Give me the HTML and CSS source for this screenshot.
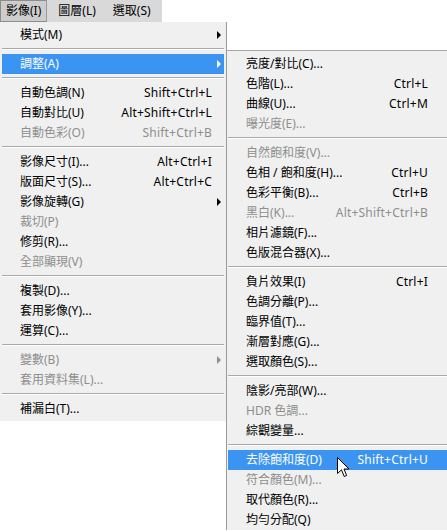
FILE: index.html
```html
<!DOCTYPE html>
<html lang="zh-Hant">
  <head>
    <meta charset="UTF-8" />
    <meta name="viewport" content="width=device-width, initial-scale=1.0" />
    <title>影像選單</title>
    <link rel="stylesheet" href="styles.css">
  </head>
  <body>
    <div class="menubar">
      <span class="bar-item open">影像(I)</span>
      <span class="bar-item">圖層(L)</span>
      <span class="bar-item">選取(S)</span>
    </div>

    <div class="menu main-menu">
      <div class="item sub"><span>模式(M)</span></div>
      <div class="sep"></div>
      <div class="item sub hover"><span>調整(A)</span></div>
      <div class="sep"></div>
      <div class="item"><span>自動色調(N)</span><span class="key">Shift+Ctrl+L</span></div>
      <div class="item"><span>自動對比(U)</span><span class="key">Alt+Shift+Ctrl+L</span></div>
      <div class="item off"><span>自動色彩(O)</span><span class="key">Shift+Ctrl+B</span></div>
      <div class="sep"></div>
      <div class="item"><span>影像尺寸(I)...</span><span class="key">Alt+Ctrl+I</span></div>
      <div class="item"><span>版面尺寸(S)...</span><span class="key">Alt+Ctrl+C</span></div>
      <div class="item sub"><span>影像旋轉(G)</span></div>
      <div class="item off"><span>裁切(P)</span></div>
      <div class="item"><span>修剪(R)...</span></div>
      <div class="item off"><span>全部顯現(V)</span></div>
      <div class="sep"></div>
      <div class="item"><span>複製(D)...</span></div>
      <div class="item"><span>套用影像(Y)...</span></div>
      <div class="item"><span>運算(C)...</span></div>
      <div class="sep"></div>
      <div class="item sub off"><span>變數(B)</span></div>
      <div class="item off"><span>套用資料集(L)...</span></div>
      <div class="sep"></div>
      <div class="item"><span>補漏白(T)...</span></div>
    </div>

    <!-- 調整 submenu -->
    <div class="menu submenu">
      <div class="item"><span>亮度/對比(C)...</span></div>
      <div class="item"><span>色階(L)...</span><span class="key">Ctrl+L</span></div>
      <div class="item"><span>曲線(U)...</span><span class="key">Ctrl+M</span></div>
      <div class="item off"><span>曝光度(E)...</span></div>
      <div class="sep"></div>
      <div class="item off"><span>自然飽和度(V)...</span></div>
      <div class="item"><span>色相 / 飽和度(H)...</span><span class="key">Ctrl+U</span></div>
      <div class="item"><span>色彩平衡(B)...</span><span class="key">Ctrl+B</span></div>
      <div class="item off"><span>黑白(K)...</span><span class="key">Alt+Shift+Ctrl+B</span></div>
      <div class="item"><span>相片濾鏡(F)...</span></div>
      <div class="item"><span>色版混合器(X)...</span></div>
      <div class="sep"></div>
      <div class="item"><span>負片效果(I)</span><span class="key">Ctrl+I</span></div>
      <div class="item"><span>色調分離(P)...</span></div>
      <div class="item"><span>臨界值(T)...</span></div>
      <div class="item"><span>漸層對應(G)...</span></div>
      <div class="item"><span>選取顏色(S)...</span></div>
      <div class="sep"></div>
      <div class="item"><span>陰影/亮部(W)...</span></div>
      <div class="item off"><span>HDR 色調...</span></div>
      <div class="item"><span>綜觀變量...</span></div>
      <div class="sep"></div>
      <div class="item hover"><span>去除飽和度(D)</span><span class="key">Shift+Ctrl+U</span></div>
      <div class="item off"><span>符合顏色(M)...</span></div>
      <div class="item"><span>取代顏色(R)...</span></div>
      <div class="item"><span>均勻分配(Q)</span></div>
    </div>

    <svg class="cursor" width="13" height="21" viewBox="0 0 13 21">
      <path d="M0.5 0.5 L0.5 16.5 L4.5 12.8 L7.2 19.5 L9.6 18.5 L7 12 L12 12 Z" fill="#fff" stroke="#000" stroke-width="1" stroke-linejoin="miter"/>
    </svg>
  </body>
</html>
```

FILE: styles.css
```css
body {
    margin: 0;
    background: #fff;
    font-family: "Noto Sans", "Noto Sans CJK TC", sans-serif;
    font-size: 12px;
    color: #000;
    position: relative;
    height: 532px;
    overflow: hidden;
}

/* top bar */

.menubar {
    display: inline-flex;
    gap: 5px;
    height: 22px;
    padding-right: 5px;
    background: #d9d9d9;
    box-sizing: border-box;
}

.bar-item {
    line-height: 20px;
    padding: 0 5px;
    border: 1px solid transparent;
}

.bar-item.open {
    background: #cdcdcd;
    border-color: #8c8c8c #9a9a9a #8c8c8c #8c8c8c;
}

/* menus */

.menu {
    background: #f0f0f0;
    box-sizing: border-box;
}

.main-menu {
    width: 227px;
    padding: 3px 2px 2px 2px;
    border-right: 1px solid #9a9a9a;
}

.submenu {
    position: absolute;
    top: 50px;
    left: 226px;
    width: 224px;
    padding: 3px 0 0 1px;
    border-top: 1px solid #a8a8a8;
    border-left: 1px solid #9a9a9a;
}

.item {
    display: flex;
    justify-content: space-between;
    height: 20px;
    line-height: 20px;
    padding: 0 12px 0 18px;
    position: relative;
    white-space: nowrap;
}

.submenu .item {
    padding-right: 22px;
}

.key {
    letter-spacing: 0.2px;
}

.item.off {
    color: #8e8e8e;
}

.item.hover {
    background: #3b94f2;
    color: #fff;
}

.item.sub::after {
    content: "";
    position: absolute;
    right: 3px;
    top: 6px;
    border-left: 4px solid #000;
    border-top: 4px solid transparent;
    border-bottom: 4px solid transparent;
}

.item.sub.off::after {
    border-left-color: #8e8e8e;
}

.item.sub.hover::after {
    border-left-color: #fff;
}

.sep {
    height: 1px;
    margin: 3px 0 4px;
    background: #a9a9a9;
    border-bottom: 1px solid #fff;
}

.cursor {
    position: absolute;
    left: 337px;
    top: 457px;
}
```
